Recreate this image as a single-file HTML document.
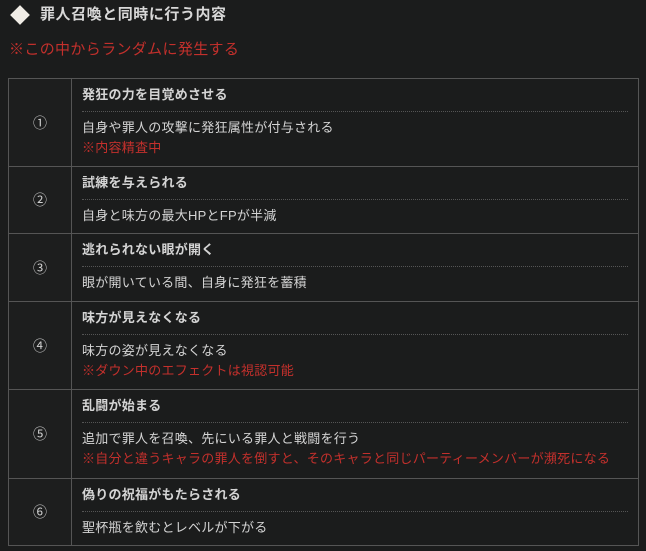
<!DOCTYPE html>
<html><head><meta charset="utf-8"><style>
body{margin:0;background:#1b1c1c;width:646px;height:551px;overflow:hidden;font-family:"Liberation Sans","Noto Sans CJK JP",sans-serif;color:#d4d4d4;position:relative}
.h{position:absolute;left:40px;top:5px;font-size:15px;font-weight:bold;color:#d8d8d8;line-height:20px;letter-spacing:0.55px}
.dia{position:absolute;left:13px;top:8px;width:14px;height:14px;background:#f0ece6;transform:rotate(45deg)}
.sub{position:absolute;left:9px;top:40px;font-size:15px;color:#c3302c;line-height:20px;letter-spacing:0.35px}
.tbl{position:absolute;left:8px;top:78px;width:629px;border:1px solid #555;}
.row{position:relative;border-top:1px solid #555;box-sizing:border-box}
.row:first-child{border-top:none}
.n{position:absolute;left:0;top:0;bottom:0;width:62px;border-right:1px solid #555;background:#1d1e1e;display:flex;align-items:center;justify-content:center;font-size:14px;color:#d0d0d0}
.c{margin-left:63px;padding:6px 10px 0 10px;font-size:13px;line-height:20px;letter-spacing:0.25px}
.t{font-weight:bold;padding-bottom:6px;border-bottom:1px dotted #555;margin-bottom:6px}
.r{color:#c3302c}
</style></head><body>
<div class="dia"></div>
<div class="h">罪人召喚と同時に行う内容</div>
<div class="sub">※この中からランダムに発生する</div>
<div class="tbl">
<div class="row" style="height:87px"><div class="n">①</div><div class="c"><div class="t">発狂の力を目覚めさせる</div>自身や罪人の攻撃に発狂属性が付与される<div class="r">※内容精査中</div></div></div>
<div class="row" style="height:67px"><div class="n">②</div><div class="c"><div class="t">試練を与えられる</div>自身と味方の最大HPとFPが半減</div></div>
<div class="row" style="height:68px"><div class="n">③</div><div class="c"><div class="t">逃れられない眼が開く</div>眼が開いている間、自身に発狂を蓄積</div></div>
<div class="row" style="height:88px"><div class="n">④</div><div class="c"><div class="t">味方が見えなくなる</div>味方の姿が見えなくなる<div class="r">※ダウン中のエフェクトは視認可能</div></div></div>
<div class="row" style="height:89px"><div class="n">⑤</div><div class="c"><div class="t">乱闘が始まる</div>追加で罪人を召喚、先にいる罪人と戦闘を行う<div class="r">※自分と違うキャラの罪人を倒すと、そのキャラと同じパーティーメンバーが瀕死になる</div></div></div>
<div class="row" style="height:67px"><div class="n">⑥</div><div class="c"><div class="t">偽りの祝福がもたらされる</div>聖杯瓶を飲むとレベルが下がる</div></div>
</div>
</body></html>
